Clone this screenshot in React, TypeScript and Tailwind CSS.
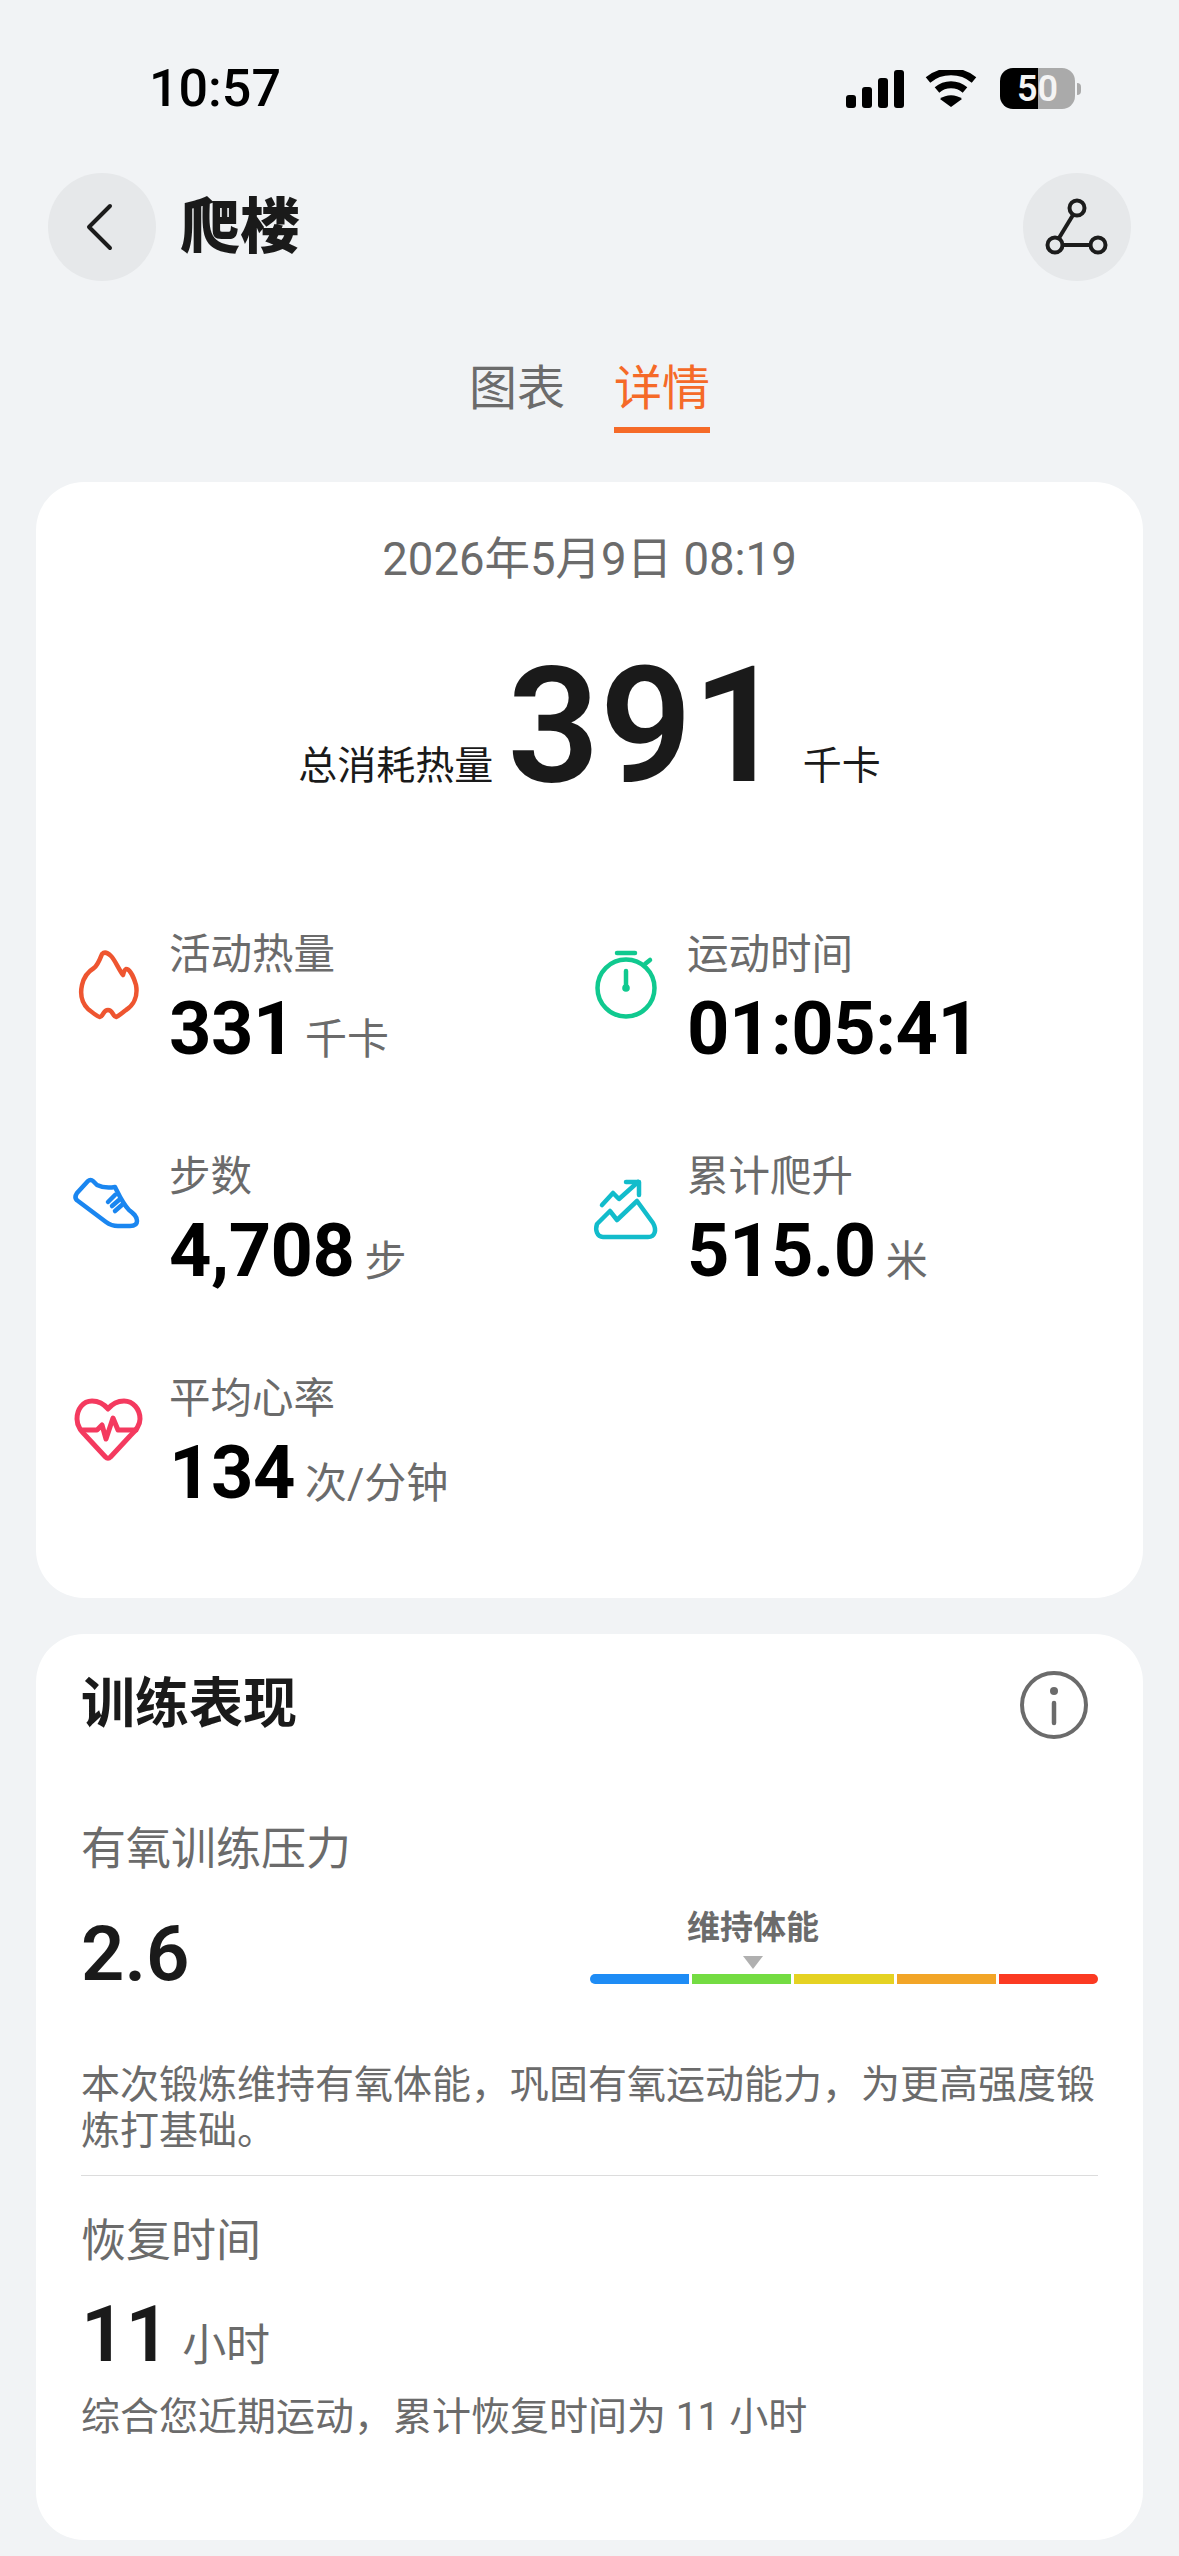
import type { ReactNode } from "react";

type StatItem = {
  label: string;
  value: string;
  unit?: string;
  icon: ReactNode;
};

function IconBox({ children }: { children: ReactNode }) {
  return (
    <svg viewBox="0 0 72 72" fill="none" className="mt-[18px] h-[72px] w-[72px] shrink-0" aria-hidden="true">
      {children}
    </svg>
  );
}

const stats: StatItem[] = [
  {
    label: "活动热量",
    value: "331",
    unit: "千卡",
    icon: (
      <IconBox>
        <path
          d="M30 6C33 3 36 5 39 8C43 12 46 20 51 27C52 24 52 22 54 21C58 21 62 30 64 37C66 48 62 57 54 62C50 65 47 68 44 69C41 69 41 62 36 62C31 62 31 69 28 69C24 68 20 64 16 61C10 55 8 46 10 37C12 28 17 23 22 20C26 17 28 11 30 6Z"
          stroke="#ee5530"
          strokeWidth="4.5"
          strokeLinejoin="round"
        />
      </IconBox>
    ),
  },
  {
    label: "运动时间",
    value: "01:05:41",
    icon: (
      <IconBox>
        <g stroke="#10c98f" strokeWidth="4.5" strokeLinecap="round">
          <circle cx="36" cy="40" r="28.5" />
          <path d="M27 5H45" />
          <path d="M55 16L60 12" />
          <path d="M36 23V40" />
        </g>
        <circle cx="36" cy="40" r="3.8" fill="#10c98f" />
      </IconBox>
    ),
  },
  {
    label: "步数",
    value: "4,708",
    unit: "步",
    icon: (
      <IconBox>
        <g stroke="#1a86f0" strokeWidth="4.5" strokeLinecap="round" strokeLinejoin="round">
          <path d="M5 23L16 11C17.5 9.5 19.5 9.5 21 11L25 15C31 18 37 18 43 17C47 25 51 34 57 40C61 43 65 46 65 51C65 55 62 56 58 56H46C41 56 38 55 34 52L6 31C3 29 3 26 5 23Z" />
          <path d="M36 32L43 25" />
          <path d="M40 36L47 30" />
          <path d="M43 41L51 34" />
        </g>
      </IconBox>
    ),
  },
  {
    label: "累计爬升",
    value: "515.0",
    unit: "米",
    icon: (
      <IconBox>
        <g stroke="#12bccb" strokeWidth="4.5" strokeLinecap="round" strokeLinejoin="round">
          <path d="M12 35L23 23L29 29L48 12" />
          <path d="M36 12H49V25" />
          <path d="M7 54L20 41L27 50L47 31L63 53C67 60 65 67 58 67H13C7 67 5 60 7 54Z" />
        </g>
      </IconBox>
    ),
  },
  {
    label: "平均心率",
    value: "134",
    unit: "次/分钟",
    icon: (
      <IconBox>
        <g stroke="#f43a5f" strokeWidth="5" strokeLinecap="round" strokeLinejoin="round">
          <path d="M36 17C32 12 27 9 20 9C11 9 5 17 5 27C5 35 10 40 14 44L33.5 65C35 66.5 37 66.5 38.5 65L58 44C62 40 68 35 68 27C68 17 61 9 52 9C45 9 40 12 36 17Z" />
          <path d="M9 38H25L30 33L34 47L41 26L46 38H64" />
        </g>
      </IconBox>
    ),
  },
];

const zones = ["#1e8cf5", "#74dc42", "#e5d222", "#f2a527", "#fb3a22"];

function StatusBar() {
  return (
    <div className="flex h-[173px] items-start justify-between pr-[98px] pl-[149px] pt-[59px]">
      <span className="text-[52px] leading-[60px] font-medium text-black">10:57</span>
      <div className="mt-[9px] flex items-center">
        <svg viewBox="0 0 60 38" className="h-[38px] w-[60px]" fill="black" aria-hidden="true">
          <rect x="0" y="25" width="10" height="13" rx="3" />
          <rect x="16" y="17" width="10" height="21" rx="3" />
          <rect x="32" y="8" width="10" height="30" rx="3" />
          <rect x="48" y="0" width="10" height="38" rx="3" />
        </svg>
        <svg viewBox="0 0 52 38" className="ml-[19px] h-[38px] w-[52px]" fill="none" aria-hidden="true">
          <path d="M3 10C16 -1 36 -1 49 10" stroke="black" strokeWidth="7" />
          <path d="M12 20C20 13 32 13 40 20" stroke="black" strokeWidth="7" />
          <path d="M26 37L15 29C21 24 31 24 37 29Z" fill="black" />
        </svg>
        <div className="ml-[23px] flex h-[41px] w-[75px] items-center justify-center rounded-[13px] bg-[linear-gradient(90deg,#000_0,#000_51%,#aaaaaa_51%,#aaaaaa_100%)] text-[36px] leading-none font-semibold text-[#f4f4f4]">
          50
        </div>
        <div className="ml-[2px] h-[12px] w-[4px] rounded-r-full bg-[#aaaaaa]" />
      </div>
    </div>
  );
}

function Header() {
  return (
    <div className="mx-[48px] flex h-[108px] items-center justify-between">
      <div className="flex items-center">
        <div className="flex h-[108px] w-[108px] items-center justify-center rounded-full bg-[#e6e8ea]">
          <svg viewBox="0 0 108 108" className="h-[108px] w-[108px]" fill="none" aria-hidden="true">
            <path d="M62 33L41 54L62 75" stroke="#1c1c1c" strokeWidth="4" strokeLinecap="round" strokeLinejoin="round" />
          </svg>
        </div>
        <h1 className="ml-[24px] pt-[2px] text-[60px] leading-none font-black text-[#1a1a1a]">爬楼</h1>
      </div>
      <div className="h-[108px] w-[108px] rounded-full bg-[#e6e8ea]">
        <svg viewBox="0 0 108 108" className="h-[108px] w-[108px]" fill="none" aria-hidden="true">
          <g stroke="#1c1c1c" strokeWidth="4">
            <circle cx="54" cy="35" r="7.5" />
            <circle cx="32" cy="72" r="7.5" />
            <circle cx="75" cy="72" r="7.5" />
            <path d="M50 42L36 65" />
            <path d="M39.5 72H67.5" />
          </g>
        </svg>
      </div>
    </div>
  );
}

function Tabs() {
  return (
    <div className="mt-[78px] flex justify-center gap-[49px]">
      <div className="text-[48px] leading-[60px] text-[#6b6b6b]">图表</div>
      <div className="flex flex-col items-center">
        <div className="text-[48px] leading-[60px] text-[#f56a28]">详情</div>
        <div className="mt-[8px] h-[6px] w-[96px] bg-[#f56a28]" />
      </div>
    </div>
  );
}

function Stat({ stat }: { stat: StatItem }) {
  return (
    <div className="flex h-[222px] items-start">
      {stat.icon}
      <div className="ml-[25px]">
        <div className="text-[41.5px] leading-[50px] text-[#6b6b6b]">{stat.label}</div>
        <div className="mt-[4px] flex items-baseline">
          <span className="text-[74px] leading-[90px] font-bold tracking-[-0.5px] text-black">{stat.value}</span>
          {stat.unit && <span className="ml-[10px] text-[42px] text-[#6b6b6b]">{stat.unit}</span>}
        </div>
      </div>
    </div>
  );
}

function SummaryCard() {
  return (
    <section className="mx-[36px] mt-[49px] h-[1116px] rounded-[48px] bg-white">
      <div className="pt-[50px] text-center text-[45.5px] leading-[56px] text-[#6b6b6b]">2026年5月9日 08:19</div>
      <div className="mt-[43px] flex items-baseline justify-center">
        <span className="-translate-y-[2px] text-[39px] text-[#1a1a1a]">总消耗热量</span>
        <span className="ml-[14px] text-[162px] leading-[190px] font-semibold text-[#1a1a1a]">391</span>
        <span className="ml-[18px] -translate-y-[2px] text-[39px] text-[#1a1a1a]">千卡</span>
      </div>
      <div className="mt-[109px] grid grid-cols-[518px_1fr] pl-[36px]">
        {stats.map((stat) => (
          <Stat key={stat.label} stat={stat} />
        ))}
      </div>
    </section>
  );
}

function TrainingCard() {
  return (
    <section className="mx-[36px] mt-[36px] h-[906px] rounded-[48px] bg-white px-[45px]">
      <div className="flex h-[141px] items-center justify-between">
        <h2 className="text-[54px] font-bold text-[#1a1a1a]">训练表现</h2>
        <svg viewBox="0 0 68 68" className="mr-[10px] h-[68px] w-[68px]" fill="none" aria-hidden="true">
          <circle cx="34" cy="34" r="32" stroke="#6b6b6b" strokeWidth="4" />
          <circle cx="34" cy="20" r="4" fill="#6b6b6b" />
          <path d="M34 32V52" stroke="#6b6b6b" strokeWidth="4.5" strokeLinecap="round" />
        </svg>
      </div>
      <div className="mt-[47px] text-[45px] leading-[56px] text-[#6b6b6b]">有氧训练压力</div>
      <div className="flex items-start justify-between">
        <span className="mt-[31px] text-[76px] leading-[90px] font-semibold text-[#1a1a1a]">2.6</span>
        <div className="mt-[28px] w-[508px]">
          <div className="pl-[97px] text-[33px] leading-[44px] font-bold text-[#6b6b6b]">维持体能</div>
          <div className="ml-[153px] mt-[6px] h-0 w-0 border-x-[10px] border-t-[13px] border-x-transparent border-t-[#b0b0b0]" />
          <div className="mt-[5px] flex gap-[3px]">
            {zones.map((color, index) => (
              <div
                key={color}
                className={`h-[10px] flex-1 ${index === 0 ? "rounded-l-full" : ""} ${index === 4 ? "rounded-r-full" : ""}`}
                style={{ backgroundColor: color }}
              />
            ))}
          </div>
        </div>
      </div>
      <p className="mt-[63px] text-[39px] leading-[46px] text-[#6b6b6b]">
        本次锻炼维持有氧体能，巩固有氧运动能力，为更高强度锻炼打基础。
      </p>
      <div className="mt-[21px] h-[1px] bg-[#dcdcdc]" />
      <div className="mt-[38px] text-[45px] leading-[56px] text-[#6b6b6b]">恢复时间</div>
      <div className="mt-[20px] flex items-baseline">
        <span className="text-[78px] leading-[90px] font-semibold text-[#1a1a1a]">11</span>
        <span className="ml-[12px] text-[44px] text-[#6b6b6b]">小时</span>
      </div>
      <p className="mt-[12px] text-[39px] leading-[50px] text-[#6b6b6b]">综合您近期运动，累计恢复时间为 11 小时</p>
    </section>
  );
}

export default function App() {
  return (
    <div className="h-[2556px] w-[1179px] overflow-hidden bg-[#f1f3f5] font-['Roboto','Noto_Sans_CJK_SC',sans-serif]">
      <StatusBar />
      <Header />
      <Tabs />
      <SummaryCard />
      <TrainingCard />
    </div>
  );
}
